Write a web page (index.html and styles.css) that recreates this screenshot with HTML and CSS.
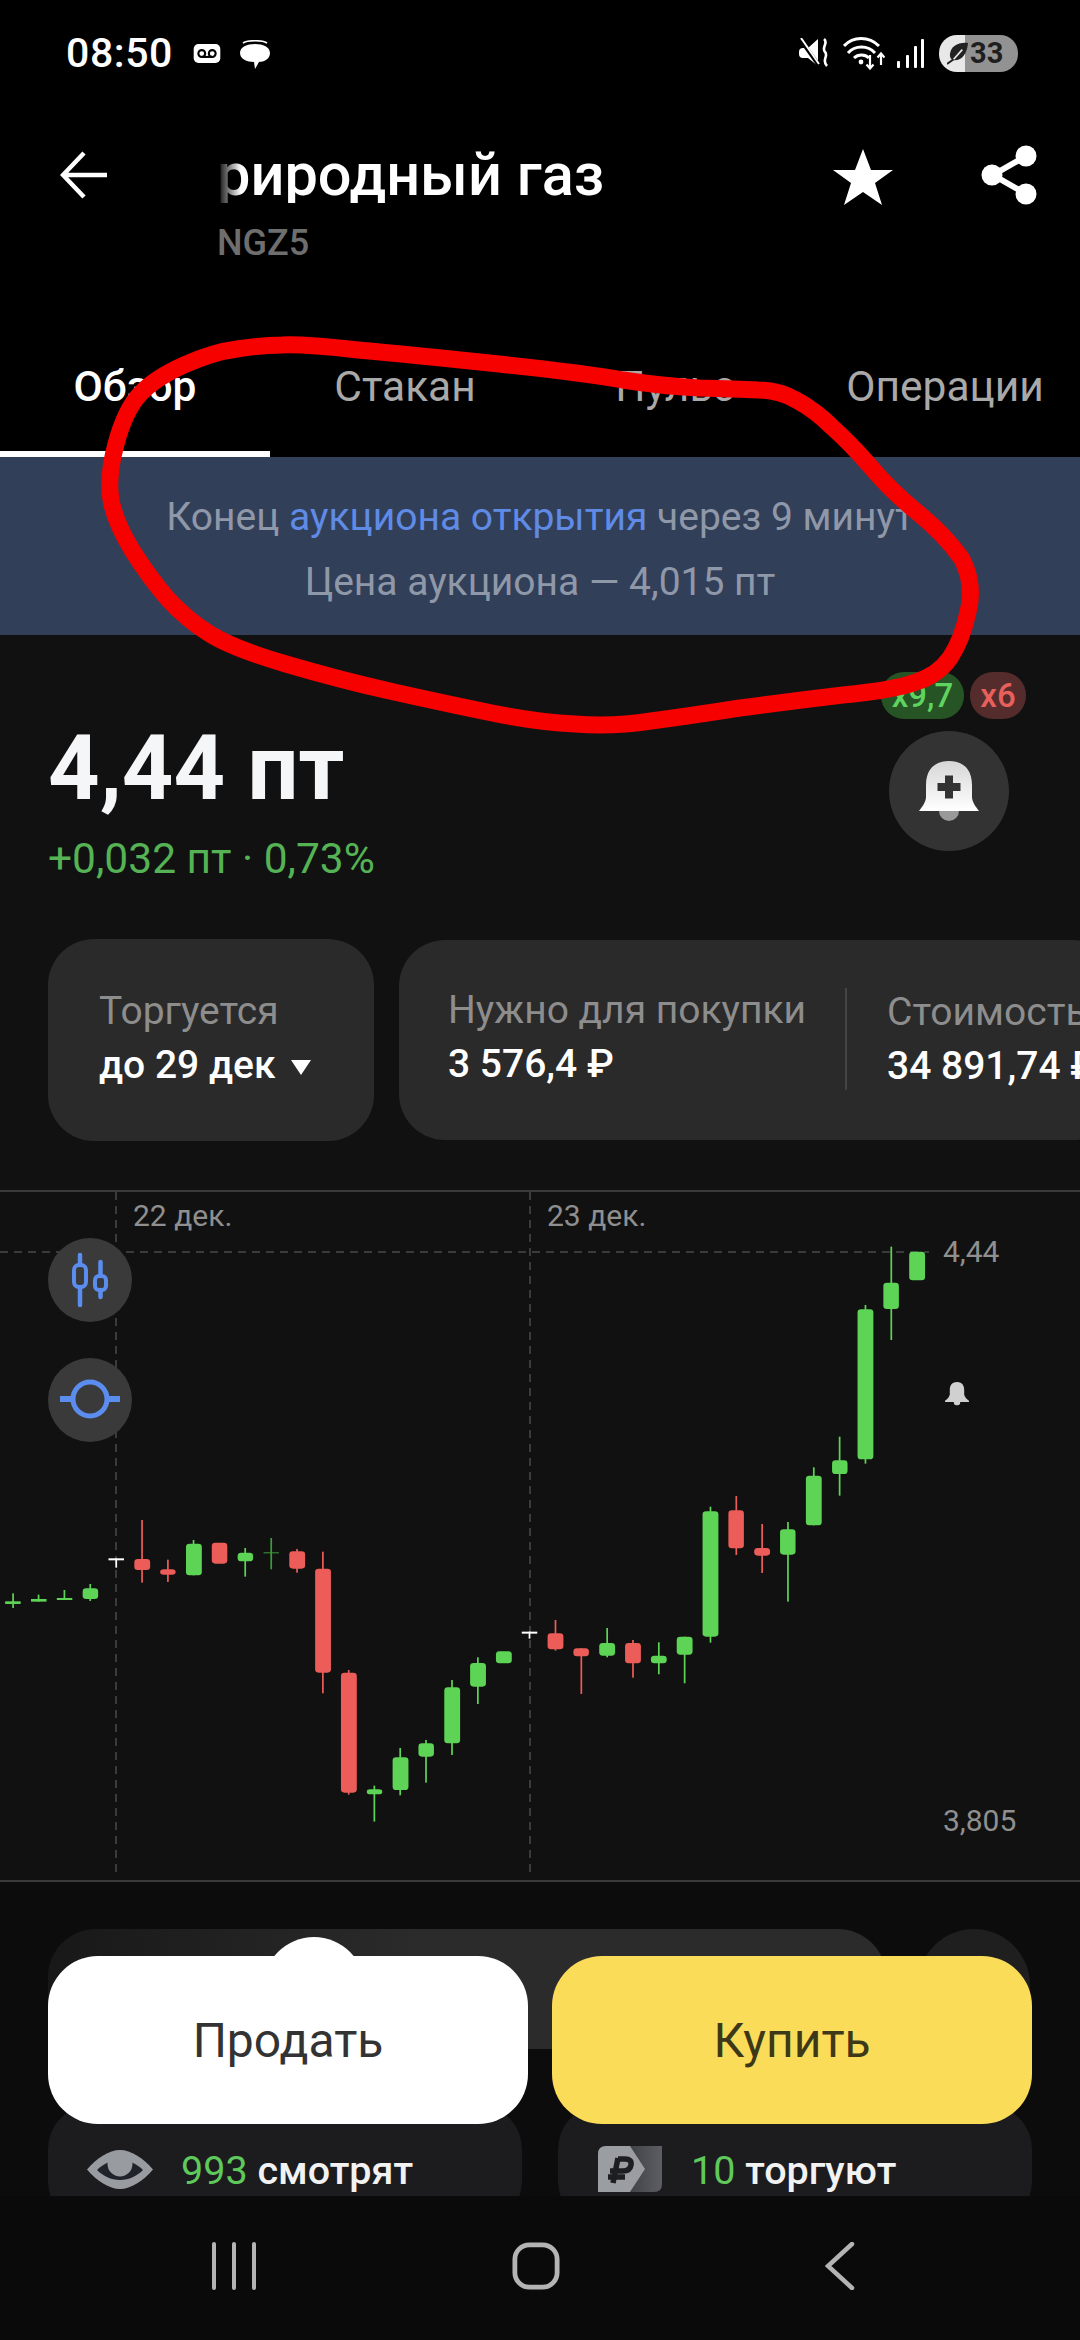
FILE: index.html
```html
<!DOCTYPE html>
<html lang="ru">
<head>
<meta charset="utf-8">
<title>Природный газ</title>
<link rel="stylesheet" href="styles.css">
</head>
<body>
<div class="phone">
  <div class="status">
    <div class="status-left">
      <span class="time">08:50</span>
      <svg class="ic-vm" viewBox="0 0 28 20"><rect width="28" height="20" rx="5" fill="#fff"/><circle cx="8.5" cy="10" r="3.6" fill="none" stroke="#000" stroke-width="2.2"/><circle cx="19.5" cy="10" r="3.6" fill="none" stroke="#000" stroke-width="2.2"/><path d="M8.5 13.6h11" stroke="#000" stroke-width="2.2"/></svg>
      <svg class="ic-chat" viewBox="0 0 32 30"><path d="M4 3C8 0 24 0 28 3" fill="none" stroke="#fff" stroke-width="1.6"/><path d="M16 4C24 4 31 7 31 13S25 22 20 22L16 29 15 22C8 22 1 19 1 13S8 4 16 4Z" fill="#fff"/></svg>
    </div>
    <div class="status-right">
      <svg class="ic-mute" viewBox="0 0 32 30"><path d="M0 14Q0 10 4 10H9L19 1V28L9 20H4Q0 20 0 16Z" fill="#fff"/><path d="M1 1 21 29" stroke="#000" stroke-width="4"/><path d="M2 0 20 26" stroke="#fff" stroke-width="2"/><path d="M25 1C30 5 22 9 26 14 30 18 22 22 28 28" fill="none" stroke="#fff" stroke-width="2.600"/></svg>
      <svg class="ic-wifi" viewBox="0 0 42 34"><g fill="none" stroke="#fff" stroke-width="3"><path d="M1 10C10 0 26 0 36 10"/><path d="M5 17C12 9 25 9 32 17"/><path d="M11 22C15 18 22 18 26 22"/></g><circle cx="18" cy="26" r="2.4" fill="#fff"/><path d="M27 19V32M23.500 28.500 27 32.500 30.500 28.500M38 29V18M34.500 21.500 38 17.500 41.500 21.500" fill="none" stroke="#fff" stroke-width="2.200"/></svg>
      <svg class="ic-signal" viewBox="0 0 27 29"><g fill="#fff"><rect x="0" y="22" width="3" height="7" rx="1"/><rect x="9" y="16" width="3" height="13" rx="1"/><rect x="17" y="7" width="3" height="22" rx="1"/><rect x="24" y="0" width="3" height="29" rx="1"/></g></svg>
      <div class="battery">
        <svg class="ic-leaf" viewBox="0 0 22 24"><path d="M22 1C12 0 4 4 3 13 3 16 4 18 6 19 16 20 21 12 22 1Z" fill="#222"/><path d="M0 23 7 18" stroke="#222" stroke-width="2"/><path d="M7 18 16 8" stroke="#e8e8e8" stroke-width="1.800"/></svg>
        <span class="batt-num">33</span>
      </div>
    </div>
  </div>

  <header class="head">
    <svg class="ic-back" viewBox="0 0 50 50"><path d="M47 25H4M24 3 3 25l21 22" fill="none" stroke="#fff" stroke-width="4.500"/></svg>
    <div class="head-title">
      <div class="title">риродный газ</div>
      <div class="ticker">NGZ5</div>
    </div>
    <svg class="ic-star" viewBox="0 0 60 56"><path d="M30 0l8 21h22L42 34l7 22-19-13-19 13 7-22L0 21h22Z" fill="#fff"/></svg>
    <svg class="ic-share" viewBox="0 0 56 60"><path d="M45 11 12 30l33 19" fill="none" stroke="#fff" stroke-width="6"/><circle cx="45" cy="11" r="10.500" fill="#fff"/><circle cx="11" cy="30" r="10.500" fill="#fff"/><circle cx="45" cy="49" r="10.500" fill="#fff"/></svg>
  </header>

  <nav class="tabs">
    <div class="tab tab-active">Обзор</div>
    <div class="tab">Стакан</div>
    <div class="tab">Пульс</div>
    <div class="tab">Операции</div>
  </nav>

  <section class="banner">
    <p class="banner-line">Конец <span class="link">аукциона открытия</span> через 9 минут</p>
    <p class="banner-line">Цена аукциона — 4,015 пт</p>
  </section>

  <main class="main">
    <section class="quote">
      <div class="quote-left">
        <div class="price">4,44 пт</div>
        <div class="change">+0,032 пт · 0,73%</div>
      </div>
      <div class="quote-right">
        <div class="badges"><span class="badge badge-up">x9,7</span><span class="badge badge-down">x6</span></div>
        <div class="bell-btn">
          <svg class="ic-bell" viewBox="0 0 60 60"><defs><linearGradient id="bellG" x1="0" y1="0" x2="0" y2="1"><stop offset="0" stop-color="#d6d6d6"/><stop offset="1" stop-color="#fff"/></linearGradient></defs><path d="M20 50A10 10 0 0 0 40 50Z" fill="#999"/><path d="M30 0C16 0 7 8 7 24V36C7 41 3 46 0 50H60C57 46 53 41 53 36V24C53 8 44 0 30 0Z" fill="url(#bellG)"/><path d="M26 14.500h8V22h7.500v8H34v7.500h-8V30H18.500v-8H26Z" fill="#333"/></svg>
        </div>
      </div>
    </section>

    <section class="stats">
      <div class="card card-a">
        <div class="label">Торгуется</div>
        <div class="value">до 29 дек <span class="caret"></span></div>
      </div>
      <div class="card card-b">
        <div class="cell cell-first">
          <div class="label">Нужно для покупки</div>
          <div class="value">3 576,4 ₽</div>
        </div>
        <div class="cell">
          <div class="label">Стоимость</div>
          <div class="value">34 891,74 ₽</div>
        </div>
      </div>
    </section>

    <section class="chart">
      <svg class="chart-svg" viewBox="0 1190 1080 690">
        <g class="grid">
          <path d="M116 1192V1878M530 1192V1878"/>
          <path d="M0 1252H929"/>
        </g>
        <g transform="translate(0 1400) scale(.3444 .3333)">
          <g class="up">
            <rect x="35.500" y="580" width="5" height="44"/><rect x="15" y="604" width="45" height="8"/>
            <rect x="109.500" y="584" width="5" height="21"/><rect x="90" y="597" width="45" height="8"/>
            <rect x="184.500" y="570" width="5" height="30"/><rect x="165" y="594" width="45" height="6"/>
            <rect x="259.500" y="552" width="5" height="51"/><rect x="240" y="565" width="45" height="32" rx="10" ry="10"/>
            <rect x="559.500" y="420" width="5" height="106"/><rect x="540" y="431" width="46" height="95" rx="10" ry="10"/>
            <rect x="709.500" y="444" width="5" height="86"/><rect x="690" y="458" width="45" height="26" rx="10" ry="10"/>
            <rect x="1084.500" y="1157" width="5" height="108"/><rect x="1065" y="1168" width="45" height="15" rx="10" ry="7"/>
            <rect x="1159.500" y="1044" width="5" height="142"/><rect x="1140" y="1072" width="46" height="98" rx="10" ry="10"/>
            <rect x="1234.500" y="1020" width="5" height="128"/><rect x="1215" y="1030" width="45" height="40" rx="10" ry="10"/>
            <rect x="1310" y="840" width="5" height="225"/><rect x="1290" y="862" width="46" height="168" rx="10" ry="10"/>
            <rect x="1385" y="772" width="5" height="140"/><rect x="1365" y="789" width="46" height="71" rx="10" ry="10"/>
            <rect x="1440" y="754" width="46" height="36" rx="10" ry="10"/>
          </g>
          <g class="up-dim">
            <rect x="785" y="414" width="5" height="94"/><rect x="765" y="457" width="45" height="3"/>
          </g>
          <g class="dn">
            <rect x="410" y="360" width="5" height="188"/><rect x="390" y="477" width="46" height="33" rx="10" ry="10"/>
            <rect x="485" y="479" width="5" height="67"/><rect x="465" y="508" width="45" height="16" rx="10" ry="8"/>
            <rect x="615" y="428" width="45" height="63" rx="10" ry="10"/>
            <rect x="860" y="447" width="5" height="71"/><rect x="840" y="454" width="46" height="52" rx="10" ry="10"/>
            <rect x="935" y="455" width="5" height="425"/><rect x="915" y="506" width="46" height="312" rx="10" ry="10"/>
            <rect x="1010" y="810" width="5" height="374"/><rect x="990" y="818" width="46" height="360" rx="10" ry="10"/>
          </g>
          <g class="tick">
            <rect x="315" y="475" width="45" height="6"/><rect x="335" y="475" width="5" height="28"/>
            <rect x="1515" y="695" width="45" height="6"/><rect x="1535" y="695" width="5" height="21"/>
          </g>
        </g>
        <g transform="translate(540 1400) scale(.3444 .3333)">
          <g class="dn">
            <rect x="42.500" y="660" width="5" height="92"/><rect x="22" y="700" width="46" height="48" rx="10" ry="10"/>
            <rect x="117.500" y="745" width="5" height="137"/><rect x="97" y="745" width="45" height="24" rx="10" ry="10"/>
            <rect x="267.500" y="720" width="5" height="113"/><rect x="247" y="729" width="46" height="61" rx="10" ry="10"/>
            <rect x="567.500" y="288" width="5" height="177"/><rect x="547" y="331" width="45" height="114" rx="10" ry="10"/>
            <rect x="642.500" y="372" width="5" height="147"/><rect x="622" y="444" width="46" height="23" rx="10" ry="10"/>
          </g>
          <g class="up">
            <rect x="192.500" y="684" width="5" height="88"/><rect x="172" y="729" width="46" height="38" rx="10" ry="10"/>
            <rect x="342.500" y="727" width="5" height="96"/><rect x="322" y="767" width="46" height="23" rx="10" ry="10"/>
            <rect x="417.500" y="710" width="5" height="140"/><rect x="397" y="710" width="46" height="54" rx="10" ry="10"/>
            <rect x="492.500" y="320" width="5" height="408"/><rect x="472" y="334" width="46" height="376" rx="10" ry="10"/>
            <rect x="717.500" y="366" width="5" height="239"/><rect x="697" y="388" width="45" height="76" rx="10" ry="10"/>
            <rect x="792.500" y="202" width="5" height="174"/><rect x="772" y="227" width="46" height="149" rx="10" ry="10"/>
            <rect x="867.500" y="110" width="5" height="177"/><rect x="848" y="181" width="45" height="41" rx="10" ry="10"/>
          </g>
        </g>
        <g transform="translate(540 1180) scale(.3444 .3333)" class="up">
          <rect x="942.500" y="375" width="5" height="476"/><rect x="922" y="388" width="46" height="450" rx="10" ry="10"/>
          <rect x="1017.500" y="200" width="5" height="280"/><rect x="997" y="308" width="45" height="79" rx="10" ry="10"/>
          <rect x="1072" y="215" width="46" height="86" rx="10" ry="10"/>
        </g>
        <g transform="translate(945 1382) scale(.4)">
          <rect x="22" y="46" width="16" height="12" rx="7" fill="#d0d0d0"/>
          <path d="M30 0C16 0 12 10 12 20V32C10 40 4 44 0 47V50H60V47C56 44 50 40 48 32V20C48 10 44 0 30 0Z" fill="#d0d0d0"/>
        </g>
      </svg>
      <span class="date date-1">22 дек.</span>
      <span class="date date-2">23 дек.</span>
      <span class="axis axis-top">4,44</span>
      <span class="axis axis-low">3,805</span>
      <div class="chart-btn chart-btn-1">
        <svg class="ic-chart" viewBox="0 0 84 84"><g fill="none" stroke="#5b8def" stroke-width="4"><rect x="26" y="27" width="12" height="22" rx="5"/><rect x="47" y="38" width="11" height="14" rx="4"/></g><path d="M32 17V27M32 49V67M52.500 24V38M52.500 52V59" stroke="#5b8def" stroke-width="4.500" stroke-linecap="round"/></svg>
      </div>
      <div class="chart-btn chart-btn-2">
        <svg class="ic-chart" viewBox="0 0 84 84"><circle cx="42" cy="41" r="17" fill="none" stroke="#5b8def" stroke-width="5"/><path d="M12 41H25M59 41H72" stroke="#5b8def" stroke-width="6"/></svg>
      </div>
    </section>

    <section class="under">
      <div class="under-row">
        <div class="under-wide"></div>
        <div class="under-round"></div>
      </div>
      <div class="social">
        <div class="social-card">
          <svg class="ic-eye" viewBox="0 0 66 39"><path d="M0 19.500C10 8 22 0 33 0S56 8 66 19.500C56 31 44 39 33 39S10 31 0 19.500Z" fill="#989ba0"/><path d="M10 20C16 14 24 10 33 10S50 14 56 20C50 26 42 30 33 30S16 26 10 20Z" fill="#20232a"/><circle cx="33" cy="14" r="12.500" fill="#989ba0"/></svg>
          <span class="social-text"><span class="num">993</span> смотрят</span>
        </div>
        <div class="social-card social-card-2">
          <svg class="ic-tag" viewBox="0 0 64 46"><defs><linearGradient id="tagG" x1="0" y1="0" x2="1" y2="0"><stop offset="0" stop-color="#3e4045"/><stop offset="1" stop-color="#5c5e63"/></linearGradient></defs><path d="M30 0H64V38Q64 46 56 46H30Z" fill="url(#tagG)"/><path d="M8 0H32L47 23 32 46H0V8Q0 0 8 0Z" fill="#9a9da2"/><path d="M20 12 15 37M20 13H27Q34 13 33 19 32 25 25 25H12M10 31H27" fill="none" stroke="#1d1e22" stroke-width="5.500"/></svg>
          <span class="social-text"><span class="num">10</span> торгуют</span>
        </div>
      </div>
    </section>
  </main>

  <div class="actions">
    <div class="bump"></div>
    <button class="btn btn-sell">Продать</button>
    <button class="btn btn-buy">Купить</button>
  </div>

  <footer class="navbar">
    <svg class="nav-ic nav-recent" viewBox="0 0 46 48"><path d="M3 2V46M23 2V46M43 2V46" fill="none" stroke="#b4b4b4" stroke-width="4" stroke-linecap="round"/></svg>
    <svg class="nav-ic nav-home" viewBox="0 0 50 50"><rect x="3" y="3" width="44" height="44" rx="15" fill="none" stroke="#b4b4b4" stroke-width="5"/></svg>
    <svg class="nav-ic nav-back" viewBox="0 0 30 48"><path d="M27 2 3 24 27 46" fill="none" stroke="#b4b4b4" stroke-width="4.500" stroke-linecap="round"/></svg>
  </footer>

  <svg class="scribble" viewBox="0 0 1080 2340">
    <path d="M358 350Q413 355 499 364Q585 373 623 380Q661 386 699 388Q737 389 758 390Q778 390 796 400Q815 410 832 427Q850 443 870 466Q890 490 917 512Q945 535 962 559Q975 585 968 612Q962 640 950 658Q938 675 916 682Q895 690 843 695Q792 701 740 708Q689 716 651 721Q613 727 575 724Q537 722 492 713Q448 704 394 692Q340 680 286 664Q232 648 210 634Q187 620 167 598Q149 577 132 550Q115 522 111 500Q107 477 116 444Q125 410 140 394Q155 378 184 365Q213 352 237 349Q262 345 282 345Q303 344 358 350Z"/>
  </svg>
</div>
</body>
</html>
```

FILE: styles.css
```css
* { box-sizing: border-box; }
html, body { margin: 0; padding: 0; background: #000; }
body { font-family: Roboto, "Liberation Sans", sans-serif; }
.phone { position: relative; width: 1080px; height: 2340px; overflow: hidden; background: #000; color: #fff; display: flex; flex-direction: column; }

/* status bar */
.status { height: 106px; padding: 0 62px 0 66px; display: flex; align-items: center; justify-content: space-between; flex: none; }
.status-left { display: flex; align-items: center; }
.time { font-size: 41px; font-weight: 500; letter-spacing: .6px; margin-right: 20px; }
.ic-vm { width: 28px; height: 19px; margin-right: 18px; }
.ic-chat { width: 32px; height: 30px; margin-top: 4px; }
.status-right { display: flex; align-items: center; }
.ic-mute { width: 32px; height: 30px; margin-right: 12px; }
.ic-wifi { width: 42px; height: 34px; margin-right: 12px; }
.ic-signal { width: 27px; height: 29px; margin-right: 15px; }
.battery { width: 79px; height: 37px; border-radius: 18px; background: linear-gradient(to right, #e8e8e8 33%, #929292 33%); display: flex; align-items: center; padding-left: 8px; }
.ic-leaf { width: 21px; height: 23px; flex: none; }
.batt-num { font-size: 29px; font-weight: 700; color: #1e1e1e; margin-left: 2px; }

/* header */
.head { height: 194px; padding: 44px 46px 0 60px; display: flex; align-items: flex-start; flex: none; }
.ic-back { width: 50px; height: 50px; flex: none; }
.head-title { margin-left: 107px; width: 500px; flex: none; }
.title { font-size: 59.5px; font-weight: 500; line-height: 56px; margin-top: -3px; -webkit-mask-image: linear-gradient(to right, transparent, #000 24px); mask-image: linear-gradient(to right, transparent, #000 24px); }
.ticker { font-size: 36px; font-weight: 500; line-height: 40px; margin-top: 20px; color: #6e6e6e; }
.ic-star { width: 60px; height: 56px; flex: none; margin-left: 116px; margin-top: -1px; }
.ic-share { width: 56px; height: 60px; flex: none; margin-left: 88px; margin-top: -5px; }

/* tabs */
.tabs { height: 157px; display: grid; grid-template-columns: repeat(4, 270px); flex: none; }
.tab { padding-top: 63px; text-align: center; font-size: 42.5px; line-height: 48px; font-weight: 400; color: #a9a9a9; border-bottom: 6px solid transparent; }
.tab-active { color: #fff; font-weight: 500; border-bottom-color: #fff; }

/* banner */
.banner { height: 178px; background: #323f59; flex: none; padding-top: 38px; display: flex; flex-direction: column; gap: 21px; align-items: center; }
.banner-line { margin: 0; font-size: 39px; line-height: 44px; color: #8f98a8; }
.link { color: #5f8be6; }

/* main */
.main { flex: 1; min-height: 0; background: #111; display: flex; flex-direction: column; }
.quote { height: 304px; flex: none; padding: 37px 54px 0 48px; display: flex; justify-content: space-between; }
.quote-left { padding-top: 42px; }
.price { font-size: 90px; font-weight: 700; line-height: 110px; color: #f5f6f8; }
.change { font-size: 42.5px; line-height: 44px; margin-top: 13px; color: #55b355; }
.quote-right { width: 145px; display: flex; flex-direction: column; gap: 12px; }
.badges { display: flex; gap: 6px; }
.badge { height: 47px; border-radius: 23px; display: flex; align-items: center; justify-content: center; font-size: 33px; font-weight: 500; }
.badge-up { width: 83px; background: #265424; color: #5fd35f; }
.badge-down { width: 56px; background: #552c2c; color: #e8605c; }
.bell-btn { width: 120px; height: 120px; margin-left: 8px; border-radius: 50%; background: #333; display: flex; align-items: center; justify-content: center; }
.ic-bell { width: 60px; height: 60px; }

.stats { height: 251px; flex: none; display: flex; align-items: flex-start; gap: 25px; padding-left: 48px; overflow: hidden; }
.card { background: #2a2a2a; border-radius: 46px; flex: none; }
.card-a { width: 326px; height: 202px; padding: 50px 0 0 51px; }
.card-b { width: 720px; height: 200px; margin-top: 1px; display: flex; padding: 50px 0 0 49px; }
.cell-first { width: 399px; height: 102px; margin-top: -2px; border-right: 2px solid #444; }
.label { font-size: 39px; line-height: 44px; color: #8d8d8d; white-space: nowrap; }
.value { font-size: 39px; line-height: 44px; margin-top: 10px; font-weight: 500; white-space: nowrap; }
.cell:last-child { padding-left: 40px; }
.caret { display: inline-block; width: 0; height: 0; margin-left: 6px; vertical-align: 3px; border-left: 10px solid transparent; border-right: 10px solid transparent; border-top: 15px solid #fff; }

/* chart */
.chart { position: relative; height: 692px; flex: none; border-top: 2px solid #3a3a3a; border-bottom: 2px solid #3a3a3a; }
.chart-svg { position: absolute; left: 0; top: -2px; width: 1080px; height: 690px; }
.grid path { fill: none; stroke: #3b3b3b; stroke-width: 2; stroke-dasharray: 8 6; }
.up { fill: #5dd455; }
.up-dim { fill: #3f9a3c; }
.dn { fill: #ec5c58; }
.tick { fill: #fff; }
.date, .axis { position: absolute; font-size: 30px; line-height: 32px; color: #8f8f8f; white-space: nowrap; }
.date-1 { left: 133px; top: 8px; }
.date-2 { left: 547px; top: 8px; }
.axis-top { left: 943px; top: 44px; }
.axis-low { left: 943px; top: 613px; }
.chart-btn { position: absolute; left: 48px; width: 84px; height: 84px; border-radius: 50%; background: #3a3a3a; }
.chart-btn-1 { top: 46px; }
.chart-btn-2 { top: 166px; }
.ic-chart { width: 84px; height: 84px; display: block; }

/* under buttons */
.under { flex: 1; min-height: 0; background: #0c0c0c; overflow: hidden; padding-top: 47px; }
.under-row { display: flex; justify-content: space-between; padding: 0 50px 0 48px; }
.under-wide { width: 838px; height: 120px; border-radius: 48px 48px 0 0; background: linear-gradient(to right, #181818, #2b2b2b 45%); }
.under-round { width: 112px; height: 120px; border-radius: 56px 56px 0 0; background: #1f1f1f; }
.social { display: flex; justify-content: space-between; padding: 0 48px; margin-top: 56px; }
.social-card { width: 474px; height: 120px; border-radius: 44px; background: #1c1c1e; padding: 44px 0 0 39px; display: flex; align-items: flex-start; }
.social-card-2 { padding-left: 40px; }
.ic-eye { width: 66px; height: 39px; margin-right: 28px; margin-top: 1px; flex: none; }
.ic-tag { width: 64px; height: 46px; margin-right: 29px; margin-top: -3px; flex: none; }
.social-text { font-size: 39.5px; line-height: 44px; font-weight: 500; color: #f2f2f2; white-space: nowrap; }
.num { color: #5fc95c; font-weight: 400; }

/* floating actions */
.actions { position: absolute; left: 48px; top: 1956px; width: 984px; height: 168px; display: flex; gap: 24px; }
.bump { position: absolute; left: 215px; top: -19px; width: 102px; height: 102px; border-radius: 50%; background: #fff; }
.btn { position: relative; flex: 1; border: 0; border-radius: 50px; font-family: inherit; font-size: 48px; color: #333; }
.btn-sell { background: #fff; }
.btn-buy { background: #fbdc58; color: #3c3818; }

/* nav bar */
.navbar { height: 144px; flex: none; background: #0a0a0a; display: flex; align-items: flex-start; padding-top: 46px; }
.nav-ic { flex: none; height: 48px; }
.nav-recent { width: 46px; margin-left: 211px; }
.nav-home { width: 50px; margin-left: 254px; }
.nav-back { width: 30px; margin-left: 264px; }

/* hand-drawn mark over the screenshot */
.scribble { position: absolute; left: 0; top: 0; width: 1080px; height: 2340px; pointer-events: none; }
.scribble path { fill: none; stroke: #f70000; stroke-width: 17; stroke-linejoin: round; }
```
